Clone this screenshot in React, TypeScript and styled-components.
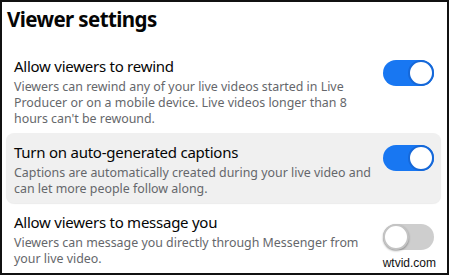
import styled, { createGlobalStyle } from "styled-components";

const GlobalStyle = createGlobalStyle`
  html, body {
    margin: 0;
    padding: 0;
    background: #fff;
  }
  body {
    font-family: "Noto Sans", "Open Sans", sans-serif;
  }
`;

const settings = [
  {
    title: "Allow viewers to rewind",
    text: "Viewers can rewind any of your live videos started in Live Producer or on a mobile device. Live videos longer than 8 hours can't be rewound.",
    on: true,
    highlighted: false,
    toggleTop: 4,
  },
  {
    title: "Turn on auto-generated captions",
    text: "Captions are automatically created during your live video and can let more people follow along.",
    on: true,
    highlighted: true,
    toggleTop: 3,
  },
  {
    title: "Allow viewers to message you",
    text: "Viewers can message you directly through Messenger from your live video.",
    on: false,
    highlighted: false,
    toggleTop: 12,
  },
];

const Frame = styled.div`
  position: relative;
  box-sizing: border-box;
  width: 449px;
  height: 275px;
  border: 2px solid #111;
  padding: 3px 6px 0 4px;
  overflow: hidden;
`;

const Heading = styled.h1`
  margin: 0 0 0 1px;
  font-size: 20.5px;
  line-height: 28px;
  font-weight: 700;
  letter-spacing: -0.6px;
  color: #050505;
`;

const List = styled.div`
  display: flex;
  flex-direction: column;
  margin-top: 14px;
`;

const Row = styled.div<{ $highlighted: boolean }>`
  display: flex;
  align-items: flex-start;
  justify-content: space-between;
  padding: 9px 7px 6px 8px;
  border-radius: 8px;
  background: ${(p) => (p.$highlighted ? "#f0f0f0" : "transparent")};
  box-shadow: ${(p) => (p.$highlighted ? "0 1px 1px rgba(0,0,0,0.08)" : "none")};
`;

const TextCol = styled.div`
  width: 366px;
`;

const Title = styled.div`
  font-size: 15px;
  line-height: 20px;
  letter-spacing: -0.25px;
  color: #050505;
`;

const Desc = styled.div`
  margin-top: 3px;
  font-size: 12.4px;
  line-height: 16px;
  color: #65676b;
`;

const Track = styled.div<{ $on: boolean; $top: number }>`
  flex: none;
  position: relative;
  width: 51px;
  height: 26px;
  margin-top: ${(p) => p.$top}px;
  border-radius: 13px;
  background: ${(p) => (p.$on ? "#1877f2" : "#cecece")};
`;

const Knob = styled.div<{ $on: boolean }>`
  position: absolute;
  top: 0;
  left: ${(p) => (p.$on ? "25px" : "0")};
  width: 26px;
  height: 26px;
  box-sizing: border-box;
  border-radius: 50%;
  background: #fff;
  border: 2px solid ${(p) => (p.$on ? "#1668d8" : "#c4c4c4")};
  box-shadow: ${(p) => (p.$on ? "none" : "0 1px 2px rgba(0,0,0,0.35)")};
`;

const Watermark = styled.div`
  position: absolute;
  right: 9px;
  bottom: 3px;
  font-family: "Liberation Sans", Arial, sans-serif;
  font-size: 12px;
  color: #111;
  background: #fff;
  padding: 0 2px;
`;

export default function App() {
  return (
    <>
      <GlobalStyle />
      <Frame>
        <Heading>Viewer settings</Heading>
        <List>
          {settings.map((s) => (
            <Row key={s.title} $highlighted={s.highlighted}>
              <TextCol>
                <Title>{s.title}</Title>
                <Desc>{s.text}</Desc>
              </TextCol>
              <Track $on={s.on} $top={s.toggleTop}>
                <Knob $on={s.on} />
              </Track>
            </Row>
          ))}
        </List>
        <Watermark>wtvid.com</Watermark>
      </Frame>
    </>
  );
}
